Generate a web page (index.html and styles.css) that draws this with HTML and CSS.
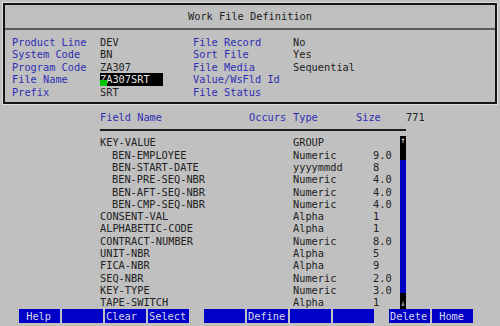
FILE: index.html
```html
<!DOCTYPE html>
<html lang="en">
<head>
  <meta charset="UTF-8">
  <title>Work File Definition</title>
  <link rel="stylesheet" href="styles.css">
</head>
<body>
  <div class="screen">
    <div class="frame">
      <div class="title">Work File Definition</div>
      <div class="info">
        <span class="lbl">Product Line</span><span class="val">DEV</span>
        <span class="lbl">File Record</span><span class="val">No</span>

        <span class="lbl">System Code</span><span class="val">BN</span>
        <span class="lbl">Sort File</span><span class="val">Yes</span>

        <span class="lbl">Program Code</span><span class="val">ZA307</span>
        <span class="lbl">File Media</span><span class="val">Sequential</span>

        <span class="lbl">File Name</span><span class="val"><span class="hl">ZA307SRT</span></span>
        <span class="lbl">Value/WsFld Id</span><span class="val"></span>

        <span class="lbl">Prefix</span><span class="val">SRT</span>
        <span class="lbl">File Status</span><span class="val"></span>
      </div>
    </div>

    <div class="fields">
      <div class="head">
        <span class="lbl">Field Name</span>
        <span class="lbl">Occurs</span>
        <span class="lbl">Type</span>
        <span class="lbl">Size</span>
        <span class="val">771</span>
      </div>
      <div class="rule"></div>
      <div class="body">
        <div class="rows">
          <div class="row"><span>KEY-VALUE</span><span>GROUP</span><span></span></div>
          <div class="row sub"><span>BEN-EMPLOYEE</span><span>Numeric</span><span>9.0</span></div>
          <div class="row sub"><span>BEN-START-DATE</span><span>yyyymmdd</span><span>8</span></div>
          <div class="row sub"><span>BEN-PRE-SEQ-NBR</span><span>Numeric</span><span>4.0</span></div>
          <div class="row sub"><span>BEN-AFT-SEQ-NBR</span><span>Numeric</span><span>4.0</span></div>
          <div class="row sub"><span>BEN-CMP-SEQ-NBR</span><span>Numeric</span><span>4.0</span></div>
          <div class="row"><span>CONSENT-VAL</span><span>Alpha</span><span>1</span></div>
          <div class="row"><span>ALPHABETIC-CODE</span><span>Alpha</span><span>1</span></div>
          <div class="row"><span>CONTRACT-NUMBER</span><span>Numeric</span><span>8.0</span></div>
          <div class="row"><span>UNIT-NBR</span><span>Alpha</span><span>5</span></div>
          <div class="row"><span>FICA-NBR</span><span>Alpha</span><span>9</span></div>
          <div class="row"><span>SEQ-NBR</span><span>Numeric</span><span>2.0</span></div>
          <div class="row"><span>KEY-TYPE</span><span>Numeric</span><span>3.0</span></div>
          <div class="row"><span>TAPE-SWITCH</span><span>Alpha</span><span>1</span></div>
        </div>
        <div class="scroll">
          <div class="scroll-up">&#8593;</div>
          <div class="scroll-track"></div>
          <div class="scroll-down">&#8595;</div>
        </div>
      </div>
    </div>

    <div class="keys">
      <div class="group">
        <span class="key"> Help</span>
        <span class="key"></span>
        <span class="key">Clear</span>
        <span class="key">Select</span>
      </div>
      <div class="group">
        <span class="key"></span>
        <span class="key">Define</span>
        <span class="key"></span>
        <span class="key"></span>
      </div>
      <div class="group">
        <span class="key">Delete</span>
        <span class="key"> Home</span>
      </div>
    </div>
  </div>
</body>
</html>
```

FILE: styles.css
```css
body {
  margin: 0;
  background: #c0c0c0;
  font-family: 'DejaVu Sans Mono', 'Liberation Mono', monospace;
  font-size: 10.3px;
  color: #222;
}

.screen {
  width: 500px;
  height: 326px;
  overflow: hidden;
  padding-top: 3px;
  box-sizing: border-box;
}

.frame {
  margin: 0 3px;
  height: 101px;
  box-sizing: border-box;
  border: 2px solid #141414;
  box-shadow: 0 0 0 1px #dedede;
}

.title {
  height: 23px;
  line-height: 23px;
  text-align: center;
  border-bottom: 2px solid #5c5c5c;
}

.info {
  display: grid;
  grid-template-columns: 88px 93px 100px 1fr;
  padding: 6px 0 0 7px;
  line-height: 12.4px;
}

.lbl {
  color: #2e2eb4;
}

.val {
  color: #222;
}

.hl {
  position: relative;
  display: inline-block;
  width: 63px;
  background: #000;
  color: #e4e4e4;
}

.hl::before {
  content: '';
  position: absolute;
  left: 0;
  bottom: 0;
  width: 7px;
  height: 6px;
  background: #00c400;
}

.fields {
  margin: 7px 0 0 100px;
}

.head {
  display: grid;
  grid-template-columns: 149px 44px 63px 50px 1fr;
  line-height: 12.4px;
}

.rule {
  width: 306px;
  height: 2px;
  margin-top: 6px;
  background: #1e1e1e;
}

.body {
  display: flex;
  margin-top: 5px;
}

.rows {
  width: 300px;
}

.row {
  display: grid;
  grid-template-columns: 193px 80px 1fr;
  line-height: 12.3px;
}

.row.sub span:first-child {
  padding-left: 12px;
}

.scroll {
  width: 6px;
  display: flex;
  flex-direction: column;
  color: #fff;
  font-size: 8px;
  line-height: 10px;
  text-align: center;
}

.scroll-up {
  height: 24px;
  background: #000;
}

.scroll-track {
  flex: 1;
  background: #0000c4;
}

.scroll-down {
  height: 16px;
  background: #000;
  display: flex;
  align-items: flex-end;
  justify-content: center;
}

.keys {
  display: flex;
  padding-left: 19px;
}

.group {
  display: flex;
  gap: 2px;
}

.group + .group {
  margin-left: 15px;
}

.key {
  width: 41px;
  height: 14px;
  line-height: 14px;
  padding-left: 1px;
  box-sizing: border-box;
  background: #0000c8;
  color: #d6d6ea;
  white-space: pre;
}
```
